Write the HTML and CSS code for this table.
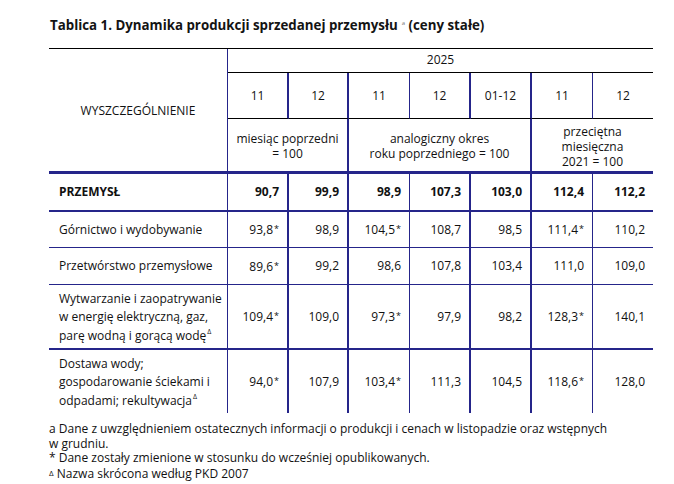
FILE: index.html
```html
<!DOCTYPE html>
<html lang="pl">
<head>
<meta charset="utf-8">
<title>Tablica 1</title>
<link rel="stylesheet" href="styles.css">
</head>
<body>
<div class="page">
  <h1 class="title">Tablica 1. Dynamika produkcji sprzedanej przemysłu<sup class="tsup">a</sup> (ceny stałe)</h1>
  <div class="tbl">
    <div class="h stub">WYSZCZEGÓLNIENIE</div>
    <div class="h year">2025</div>

    <div class="h m b2">11</div>
    <div class="h m b2">12</div>
    <div class="h m b1">11</div>
    <div class="h m b2">12</div>
    <div class="h m b2">01-12</div>
    <div class="h m b1">11</div>
    <div class="h m">12</div>

    <div class="h g g1 b2"><span>miesiąc poprzedni<br>= 100</span></div>
    <div class="h g g2 b2"><span>analogiczny okres<br>roku poprzedniego = 100</span></div>
    <div class="h g g3"><span>przeciętna<br>miesięczna<br>2021 = 100</span></div>

    <div class="row r-main bold">
      <div class="c lab">PRZEMYSŁ</div>
      <div class="c num">90,7</div><div class="c num">99,9</div><div class="c num">98,9</div><div class="c num">107,3</div><div class="c num">103,0</div><div class="c num">112,4</div><div class="c num">112,2</div>
    </div>
    <div class="row r-thin">
      <div class="c lab">Górnictwo i wydobywanie</div>
      <div class="c num"><span>93,8<span class="ast">*</span></span></div><div class="c num">98,9</div><div class="c num"><span>104,5<span class="ast">*</span></span></div><div class="c num">108,7</div><div class="c num">98,5</div><div class="c num"><span>111,4<span class="ast">*</span></span></div><div class="c num">110,2</div>
    </div>
    <div class="row r-thin">
      <div class="c lab">Przetwórstwo przemysłowe</div>
      <div class="c num"><span>89,6<span class="ast">*</span></span></div><div class="c num">99,2</div><div class="c num">98,6</div><div class="c num">107,8</div><div class="c num">103,4</div><div class="c num">111,0</div><div class="c num">109,0</div>
    </div>
    <div class="row r-mid">
      <div class="c lab multi"><span>Wytwarzanie i zaopatrywanie<br>w energię elektryczną, gaz,<br>parę wodną i gorącą wodę<sup class="tri">Δ</sup></span></div>
      <div class="c num"><span>109,4<span class="ast">*</span></span></div><div class="c num">109,0</div><div class="c num"><span>97,3<span class="ast">*</span></span></div><div class="c num">97,9</div><div class="c num">98,2</div><div class="c num"><span>128,3<span class="ast">*</span></span></div><div class="c num">140,1</div>
    </div>
    <div class="row r-last">
      <div class="c lab multi"><span>Dostawa wody;<br>gospodarowanie ściekami i<br>odpadami; rekultywacja<sup class="tri">Δ</sup></span></div>
      <div class="c num"><span>94,0<span class="ast">*</span></span></div><div class="c num">107,9</div><div class="c num"><span>103,4<span class="ast">*</span></span></div><div class="c num">111,3</div><div class="c num">104,5</div><div class="c num"><span>118,6<span class="ast">*</span></span></div><div class="c num">128,0</div>
    </div>
  </div>
  <div class="notes">
    <p>a Dane z uwzględnieniem ostatecznych informacji o produkcji i cenach w listopadzie oraz wstępnych<br>w grudniu.</p>
    <p>* Dane zostały zmienione w stosunku do wcześniej opublikowanych.</p>
    <p><span class="ntri">Δ</span> Nazwa skrócona według PKD 2007</p>
  </div>
</div>
</body>
</html>
```
FILE: styles.css
```css
html, body {
  margin: 0;
  background: #ffffff;
}
body {
  font-family: "Open Sans", "Noto Sans", sans-serif;
  color: #111111;
}
.page {
  padding: 16px 0 0 49px;
  width: 604px;
}
.title {
  margin: 0 0 14px 1px;
  font-size: 13.3px;
  font-weight: 700;
  line-height: 18px;
  color: #141414;
}
.tsup {
  font-size: 6px;
  font-weight: 400;
  color: #777;
  vertical-align: 5px;
  line-height: 0;
  margin-left: 4px;
}
.tbl {
  display: grid;
  grid-template-columns: 179px 61px 60px 61px 61px 61px 61px 60px;
  grid-template-rows: 24px 46px 55px 38px 36px 37px 65px 63px;
  border-top: 1px solid #000;
  font-size: 12px;
  line-height: 14.5px;
}
.row {
  display: contents;
}
.h, .c {
  box-sizing: border-box;
  display: flex;
  align-items: center;
}
.h {
  justify-content: center;
  text-align: center;
}
.stub {
  grid-column: 1;
  grid-row: 1 / 4;
  border-right: 1px solid #25258a;
  border-bottom: 3px solid #25258a;
  padding-top: 2px;
}
.year {
  grid-column: 2 / 9;
  grid-row: 1;
  border-bottom: 1px solid #000;
}
.m {
  grid-row: 2;
  border-bottom: 1px solid #000;
  padding-top: 2px;
}
.g {
  grid-row: 3;
  border-bottom: 3px solid #25258a;
  padding-top: 2px;
  line-height: 15px;
}
.g1 { grid-column: 2 / 4; }
.g2 { grid-column: 4 / 7; }
.g3 { grid-column: 7 / 9; }
.b1 { border-right: 1px solid #25258a; }
.b2 { border-right: 2px solid #25258a; }

.row > .c:nth-child(1) { border-right: 1px solid #25258a; }
.row > .c:nth-child(2) { border-right: 2px solid #25258a; }
.row > .c:nth-child(3) { border-right: 2px solid #25258a; }
.row > .c:nth-child(4) { border-right: 1px solid #25258a; }
.row > .c:nth-child(5) { border-right: 2px solid #25258a; }
.row > .c:nth-child(6) { border-right: 2px solid #25258a; }
.row > .c:nth-child(7) { border-right: 1px solid #25258a; }

.r-main > .c { border-bottom: 2px solid #25258a; }
.r-thin > .c { border-bottom: 1px solid #25258a; }
.r-mid > .c { border-bottom: 2px solid #25258a; }

.bold { font-weight: 700; }
.lab {
  padding-left: 10px;
  padding-top: 1px;
}
.multi {
  line-height: 18.5px;
  padding-top: 2px;
}
.num {
  justify-content: flex-end;
  padding-right: 8px;
  padding-top: 1px;
}
.ast {
  font-size: 9px;
  vertical-align: 2px;
  margin-left: 1px;
}
.tri {
  font-size: 7px;
  line-height: 0;
  vertical-align: 6px;
  margin-left: 1px;
}
.notes {
  margin-top: 9px;
  font-size: 12px;
  line-height: 14.5px;
}
.notes p {
  margin: 0;
}
.ntri {
  font-size: 8px;
  vertical-align: 2px;
}
```
